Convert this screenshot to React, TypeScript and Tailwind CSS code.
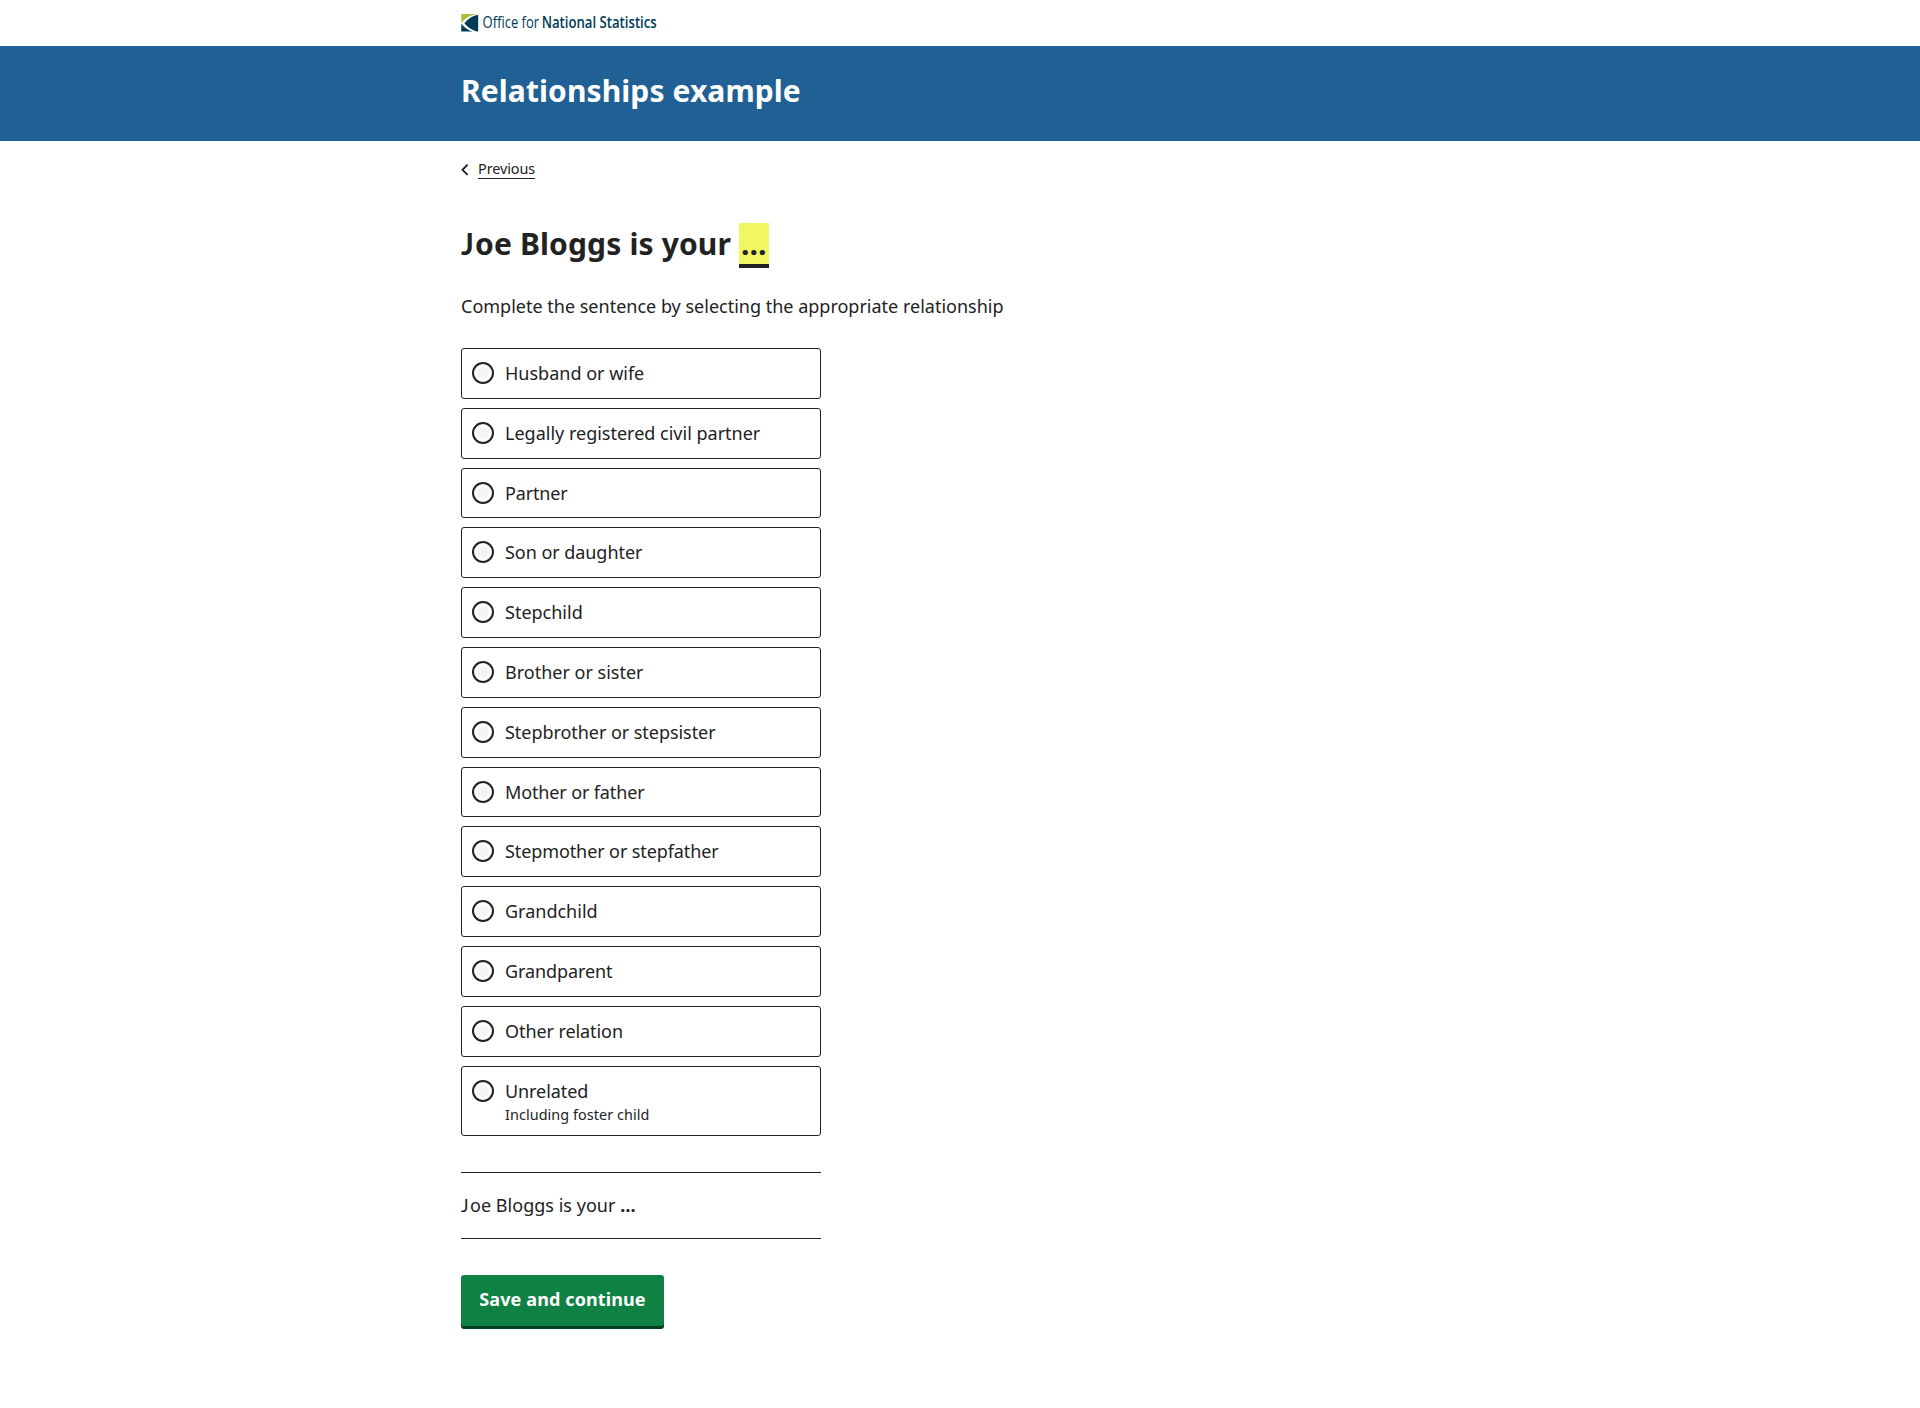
import React from 'react';

type Relationship = { label: string; hint?: string; tracking?: string };

const relationships: Relationship[] = [
  { label: 'Husband or wife' },
  { label: 'Legally registered civil partner' },
  { label: 'Partner', tracking: 'tracking-[-0.15px]' },
  { label: 'Son or daughter', tracking: 'tracking-[-0.05px]' },
  { label: 'Stepchild' },
  { label: 'Brother or sister' },
  { label: 'Stepbrother or stepsister', tracking: 'tracking-[-0.05px]' },
  { label: 'Mother or father', tracking: 'tracking-[-0.13px]' },
  { label: 'Stepmother or stepfather', tracking: 'tracking-[-0.1px]' },
  { label: 'Grandchild' },
  { label: 'Grandparent', tracking: 'tracking-[-0.1px]' },
  { label: 'Other relation', tracking: 'tracking-[-0.08px]' },
  { label: 'Unrelated', hint: 'Including foster child', tracking: 'tracking-[-0.08px]' },
];

function Logo() {
  return (
    <svg
      width="200"
      height="20"
      viewBox="0 0 200 20"
      className="overflow-visible"
      role="img"
      aria-label="Office for National Statistics"
    >
      <path d="M.3 0H16C9.500 1 4 4 .3 9.300Z" fill="#a8bd3a" />
      <path d="M17.200 1V17.500H15.500C10.500 16 6.500 13 3.400 9.300C7 4.800 11 1.700 17.200 1Z" fill="#003c57" />
      <path d="M.3 9.800C3.200 13.500 7 16 11.500 17.500H.3Z" fill="#003c57" />
      <g fill="#003c57" fontFamily="'Open Sans', 'Noto Sans', sans-serif" fontSize="15.6">
        <text x="21.600" y="14.400" textLength="56.500" lengthAdjust="spacingAndGlyphs">Office for</text>
        <text x="80.700" y="14.400" textLength="115" lengthAdjust="spacingAndGlyphs" fontWeight="600">National Statistics</text>
      </g>
    </svg>
  );
}

function RadioOption({ label, hint, tracking = 'tracking-normal' }: Relationship) {
  return (
    <label
      className={`flex w-[360px] items-start rounded-[3px] border border-[#222] pl-[10px] ${
        hint ? 'h-[70px]' : 'h-[50.8px]'
      }`}
    >
      <input
        type="radio"
        name="relationship"
        className="mt-[13px] size-[22px] shrink-0 appearance-none rounded-full border-2 border-[#222] bg-[#f5f5f5] shadow-[inset_0_0_0_3px_#fff]"
      />
      <span className="ml-[11px] flex flex-col pt-[12px] leading-[25px]">
        <span className={tracking}>{label}</span>
        {hint && <span className="text-[14.4px] leading-[21px] tracking-[0.07px]">{hint}</span>}
      </span>
    </label>
  );
}

export default function App() {
  return (
    <div className="min-h-[1408px] bg-white font-['Noto_Sans',sans-serif] text-[18px] text-[#222]">
      <header>
        <div className="mx-auto flex h-[46px] w-[998px] items-start pt-[14px]">
          <Logo />
        </div>
        <div className="h-[95px] bg-[#206095]">
          <div className="mx-auto w-[998px] pt-[25px] text-[30px] leading-[40px] font-bold tracking-[0.1px] text-white">
            Relationships example
          </div>
        </div>
      </header>
      <main className="mx-auto w-[998px]">
        <nav className="flex h-[54px] items-start pt-[18px] text-[14.4px]">
          <svg width="8" height="12" viewBox="0 0 8 12" className="mt-[5px] mr-[9px]" fill="none">
            <path d="M6.600 .7L1.500 5.800L6.600 10.900" stroke="#222" strokeWidth="1.900" />
          </svg>
          <a href="#" className="border-b border-[#222] leading-[19px] tracking-[-0.07px]">Previous</a>
        </nav>
        <h1 className="mt-[28px] flex h-[45px] items-start text-[30px] leading-[41px] font-bold">
          <span className="w-[278px] whitespace-pre tracking-[0.15px]">
            <span className="inline-block w-[14px] font-['Lato',sans-serif] leading-none">J</span>oe Bloggs is your{' '}
          </span>
          <em className="w-[30px] border-b-4 border-[#222] bg-[#f0f762] px-[2px] not-italic">…</em>
        </h1>
        <p className="mt-[24px] leading-[29px]">
          Complete the sentence by selecting the appropriate relationship
        </p>
        <form className="mt-[27px]">
          <div className="flex flex-col gap-[9px]">
            {relationships.map((r) => (
              <RadioOption key={r.label} {...r} />
            ))}
          </div>
          <p className="mt-[36px] h-[67px] w-[360px] border-y border-[#222] pt-[18px] leading-[29px] tracking-[0.03px]">
            <span className="inline-block w-[9px] font-['Lato',sans-serif] leading-none">J</span>oe Bloggs is your{' '}
            <strong>…</strong>
          </p>
          <button
            type="button"
            className="mt-[36px] h-[51px] w-[203px] rounded-[3px] bg-[#0f8243] pb-[2px] font-bold tracking-[0.11px] whitespace-nowrap text-white shadow-[0_3px_0_#073d20]"
          >
            Save and continue
          </button>
        </form>
      </main>
    </div>
  );
}
